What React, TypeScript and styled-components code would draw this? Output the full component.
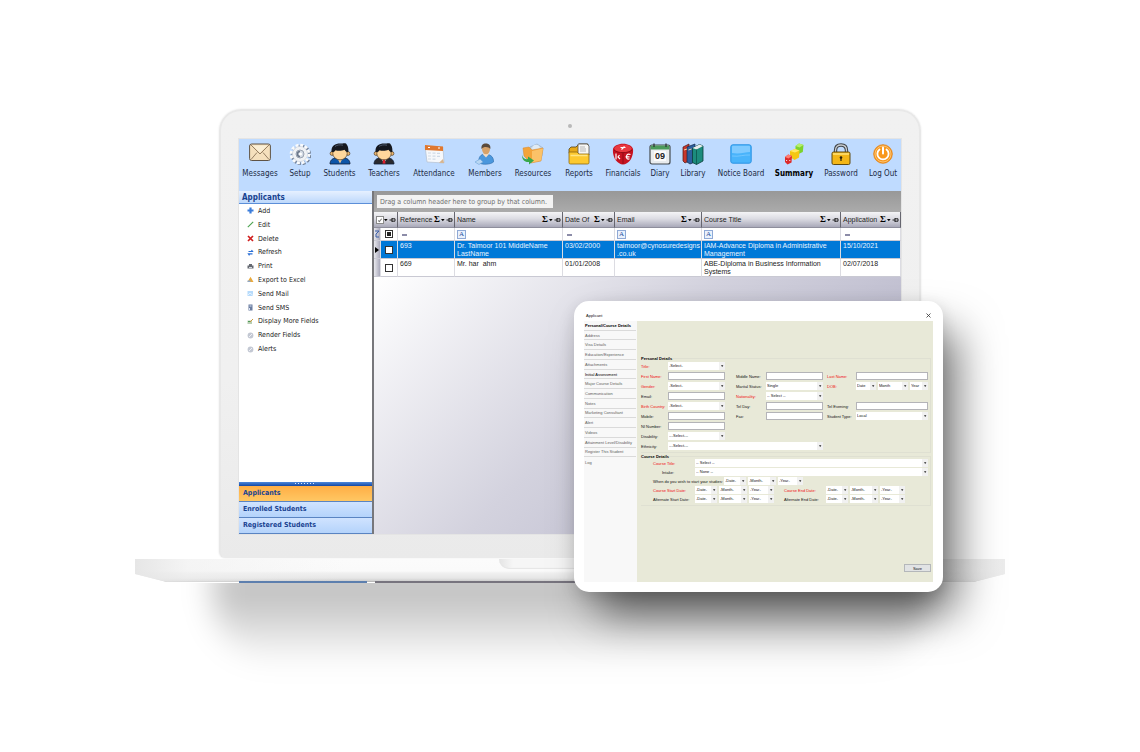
import React from "react";
import styled, { createGlobalStyle, css } from "styled-components";

const UI = `"DejaVu Sans Condensed", "DejaVu Sans", sans-serif`;
const GRID = `"Liberation Sans", Arial, sans-serif`;

const Global = createGlobalStyle`
  *, *::before, *::after { box-sizing: border-box; }
  body { margin: 0; background: #fff; font-family: ${UI}; color: #222; }
  button, input, select { font: inherit; color: inherit; margin: 0; padding: 0; border: 0; border-radius: 0; background: none; }
  button { cursor: pointer; }
  ul { list-style: none; margin: 0; padding: 0; }
  h1, h2 { margin: 0; }
`;

/* ---------- Laptop ---------- */

const Page = styled.main`
  min-height: 100vh;
  padding: 109px 135px 60px;
  overflow: hidden;
`;

const Laptop = styled.div`
  position: relative;
  display: flex;
  flex-direction: column;
`;

const Lid = styled.section`
  margin: 0 84px;
  padding: 0 18px 24px;
  border: 2px solid #e8e8e8;
  border-bottom: 0;
  border-radius: 22px 22px 6px 6px;
  background: linear-gradient(#f1f1f1, #f0f0f0 60%, #eaeaea);
  box-shadow: 0 0 2px #e4e4e4;
`;

const CameraBar = styled.div`
  height: 28px;
  display: grid;
  place-items: center;
  padding-top: 2px;
  &::before {
    content: "";
    width: 4px;
    height: 4px;
    border-radius: 50%;
    background: #b9b9b9;
  }
`;

const Screen = styled.div`
  display: flex;
  flex-direction: column;
  height: 395px;
  overflow: hidden;
  outline: 1px solid #e4e4e4;
  background: #fff;
`;

const Base = styled.div`
  position: relative;
  height: 23px;
  margin-top: 1px;
  display: flex;
  justify-content: center;
  background: linear-gradient(90deg, #e6e6e6, rgba(240, 240, 240, 0.6) 6%, transparent 24%, transparent 76%, #ececec),
    linear-gradient(#fbfbfb, #fafafa 12px, #f0f0f0 14px, #e6e6e6 19px, #cfcfcf 22px, #a5a5a5);
  clip-path: polygon(0 0, 100% 0, 100% 15px, calc(100% - 12px) 18px, calc(100% - 32px) 100%, 32px 100%, 12px 18px, 0 15px);
`;

const Notch = styled.div`
  width: 142px;
  height: 10px;
  border-radius: 0 0 10px 10px;
  background: linear-gradient(90deg, #e4e4e4, #f6f6f6 10%, #f6f6f6 90%, #e4e4e4);
  box-shadow: inset 0 -1px 1px #e6e6e6;
`;

const Underside = styled.div`
  display: flex;
  gap: 8px;
  height: 2px;
  margin: -1px 104px 0;
  position: relative;
  &::before {
    content: "";
    width: 128px;
    background: #5d7fae;
  }
  &::after {
    content: "";
    flex: 1;
    background: #77747e;
  }
`;

const FloorShadow = styled.div`
  height: 110px;
  overflow: hidden;
  padding: 0 78px;
  &::before {
    content: "";
    display: block;
    height: 100px;
    margin-top: -18px;
    background: linear-gradient(rgba(0, 0, 0, 0.27), rgba(0, 0, 0, 0.21) 40%, rgba(0, 0, 0, 0));
    border-radius: 0 0 70px 70px;
    filter: blur(15px);
  }
`;

/* ---------- Toolbar ---------- */

const Toolbar = styled.nav`
  flex: none;
  height: 52px;
  display: grid;
  grid-template-columns: 40fr 40fr 39fr 50fr 50fr 52fr 44fr 48fr 40fr 34fr 32fr 64fr 42fr 52fr 32fr;
  justify-items: center;
  align-items: start;
  padding: 4px 2px 0 1px;
  background: #bfdbff;
`;

const Tool = styled.button<{ $strong?: boolean }>`
  display: flex;
  flex-direction: column;
  align-items: center;
  gap: 3px;
  white-space: nowrap;
  font-size: 8px;
  line-height: 12px;
  font-weight: ${(p) => (p.$strong ? 700 : 400)};
  color: ${(p) => (p.$strong ? "#000" : "#1d2b45")};
  svg { width: 22px; height: 22px; display: block; }
`;

const Envelope = () => (
  <svg viewBox="0 0 22 22">
    <rect x=".6" y="1" width="20.800" height="16.500" rx="2" fill="#f5e0bd" stroke="#5f5345" />
    <path d="M2 2l9 9 9-9M2 16.500l6-7M20 16.500l-6-7" fill="none" stroke="#8b755a" strokeWidth=".9" />
    <path d="M3.500 2.500h15L11 9.500z" fill="#fbefd6" />
  </svg>
);
const Cog = () => (
  <svg viewBox="0 0 22 22">
    <circle cx="12" cy="12" r="8.800" fill="none" stroke="#76859b" strokeWidth="3" strokeDasharray="2.9 1.708" />
    <circle cx="11" cy="11" r="8.800" fill="none" stroke="#fafbfc" strokeWidth="3" strokeDasharray="2.9 1.708" />
    <circle cx="11" cy="11" r="7.600" fill="#f0f2f5" stroke="#c3c9d2" strokeWidth=".5" />
    <circle cx="11" cy="11" r="4" fill="#d3dae4" stroke="#9aa3b1" strokeWidth="1" />
    <path d="M11 8.500a2.500 2.500 0 1 0 0 5" fill="none" stroke="#6b7789" strokeWidth="1.500" />
    <circle cx="11.500" cy="11" r="1.500" fill="#fff" />
  </svg>
);
const Person = ({ teacher }: { teacher?: boolean }) => (
  <svg viewBox="0 0 22 22">
    <path d="M1 21c0-4 3-6 6-6h8c3 0 6 2 6 6z" fill={teacher ? "#2a2a2e" : "#0d55a8"} stroke="#10203a" strokeWidth=".8" />
    <path d="M8 14.500h6l-3 6z" fill={teacher ? "#fff" : "#f5c78a"} />
    {teacher && <path d="M10.200 16h1.600l.7 4.500h-3z" fill="#e01e2d" />}
    <circle cx="3" cy="10.500" r="1.900" fill="#f0b970" stroke="#3a2a18" strokeWidth=".6" />
    <circle cx="19" cy="10.500" r="1.900" fill="#f0b970" stroke="#3a2a18" strokeWidth=".6" />
    <ellipse cx="11" cy="10.500" rx="7.200" ry="6.300" fill="#ffd79c" stroke="#3a2a18" strokeWidth=".6" />
    <path d="M2.500 9C2 3 6 .6 11 .6c3 0 4-.8 6-.1 2 2 2.700 5.500 2.300 8.500-2 0-2.800-.8-3.800-2.300-3 1.500-7 1.200-9 .5-.6 1.500-2.500 2-4 1.800z" fill="#15181f" />
    <path d="M6 3.500c2-1.600 5-2 8-1.300" fill="none" stroke="#59677c" strokeWidth=".8" />
  </svg>
);
const Planner = () => (
  <svg viewBox="0 0 22 22">
    <path d="M2 3l18 1 1 16-17-1z" fill="#f6f8fb" stroke="#b8c4d4" strokeWidth=".8" />
    <path d="M2 2l18 1.500V8L2 7z" fill="#e0782f" />
    <path d="M5 4.500h2M15 5h2" stroke="#fff" strokeWidth="1.200" />
    <path d="M5 10h3M9.500 10.200h3M14 10.400h3M5 13h3M9.500 13.200h3M14 13.400h3M5 16h3M9.500 16.200h3" stroke="#cfd9e6" strokeWidth="1.200" />
    <path d="M16 19.800l5 .2-1-4z" fill="#d7b48e" />
  </svg>
);
const Member = () => (
  <svg viewBox="0 0 22 22">
    <path d="M5 20c-1-6 2-9 6-9s9 2 8.500 8c-3 2.500-10 3-14.500 1z" fill="#4a97dd" stroke="#2b69a8" strokeWidth=".6" />
    <path d="M9 11.500l3 3 3-3.500-1-2H10z" fill="#f3dcc4" />
    <ellipse cx="12" cy="6" rx="4" ry="5.200" fill="#d6a26a" />
    <path d="M7.500 6C7 2 9 .3 12 .4c3 .1 5 2 4.300 5.600C15 4 10 3 7.500 6z" fill="#5a4a3c" />
    <path d="M1 19l5-3 3 3-4 2.500z" fill="#b9d7f3" stroke="#6ea4d6" strokeWidth=".6" />
  </svg>
);
const Resource = () => (
  <svg viewBox="0 0 22 22">
    <path d="M8 4l7-3 6 4-1 8H9z" fill="#c6d6e6" stroke="#90a8c0" strokeWidth=".6" />
    <circle cx="14" cy="5.500" r="3.800" fill="#dfeaf5" />
    <path d="M1 5l6-1 3 3 11-2-2 13-10 2L2 13z" fill="#f3a43a" stroke="#d9872a" strokeWidth=".5" />
    <path d="M10 8l11-2.500-2 12-9 2z" fill="#fbc268" />
    <path d="M0 12c1 4 4 4.500 6 4v-2.500l6 4-5 4v-2.500c-4 .5-7-2-7-7z" fill="#39a849" />
  </svg>
);
const Folder = () => (
  <svg viewBox="0 0 22 22">
    <path d="M1 9V6l2-2h5l3-3h9v12H2z" fill="#e7a918" stroke="#54431a" strokeWidth=".8" />
    <path d="M10 1h9l2 2v9H10z" fill="#f7f7f5" stroke="#55524a" strokeWidth=".8" />
    <path d="M12 4h5M12 6h6M12 8h6" stroke="#a7a7a7" strokeWidth=".8" />
    <path d="M1 9h8l2 2h10v8.500c0 1-.5 1.500-1.500 1.500h-17C1.500 21 1 20.500 1 19.500z" fill="#fdc92f" stroke="#8a6811" strokeWidth=".8" />
    <path d="M2.500 12.500h17" stroke="#ffe684" strokeWidth="1.500" />
  </svg>
);
const Dice = () => (
  <svg viewBox="0 0 22 22">
    <path d="M11 .8c5 0 9.500 2.400 10 5.200.5 4-1 9-3 11.500-1.700 2.200-4.500 4-7 4s-5.300-1.800-7-4C2 15 .5 10 1 6 1.500 3.200 6 .8 11 .8z" fill="#c61220" />
    <ellipse cx="11" cy="5.500" rx="8.700" ry="4" fill="#e8383f" />
    <path d="M11 9.500V21M2 7c2 2 5.500 2.600 9 2.600S18 9 20 7" fill="none" stroke="#8d0912" strokeWidth=".9" />
    <path d="M8.500 4.500h5M9.500 6.500l3-3M4 10.500v6M7.500 12l-1.500 2 2 2M18.500 11.500c-3-1.300-4 .4-4 2.300s1 2.800 3 2M13.500 13.800h4" stroke="#fff" strokeWidth="1.200" fill="none" />
  </svg>
);
const NumText = styled.text`
  font: 700 9px "Liberation Sans", sans-serif;
`;
const Calendar = () => (
  <svg viewBox="0 0 22 22">
    <rect x="1" y="2" width="20" height="19" rx="2" fill="#e9ecee" stroke="#454b50" strokeWidth="1.200" />
    <path d="M1.600 4c0-1 .6-1.500 1.400-1.500h16c.9 0 1.400.5 1.400 1.500v2.500H1.600z" fill="#4b9a5a" />
    <path d="M5 .5v3.500M17 .5v3.500" stroke="#303438" strokeWidth="1.300" />
    <rect x="5" y="8" width="12" height="10" fill="#fbfbfb" />
    <NumText x="11" y="16" textAnchor="middle" fill="#222">09</NumText>
  </svg>
);
const Books = () => (
  <svg viewBox="0 0 22 22">
    <path d="M1 4l6-3v17l-4 2-2-2z" fill="#c9372c" stroke="#4d1512" strokeWidth=".7" />
    <path d="M5 4l8-3v18l-5 2-3-2z" fill="#2c5f9e" stroke="#12294a" strokeWidth=".7" />
    <path d="M10.500 5l7-3.500L21 3v15l-6.500 3.500-4-2z" fill="#1c8c7d" stroke="#0b3d39" strokeWidth=".8" />
    <path d="M10.500 5l4 1.500L21 3l-3.500-1.500z" fill="#e8ecec" />
    <path d="M14.500 6.500v15" stroke="#0d564d" strokeWidth=".8" />
    <path d="M2 7l3-1M6.500 7l3-1" stroke="#f3d6a0" strokeWidth="1" />
  </svg>
);
const Board = () => (
  <svg viewBox="0 0 22 22">
    <rect x=".8" y="1.800" width="20.400" height="18.400" rx="2" fill="#49b4fb" stroke="#2a93e4" />
    <path d="M2 10V4c0-.8.4-1.200 1.200-1.200h15.600c.8 0 1.200.4 1.200 1.200v5c-5 0-10 2.500-18 1z" fill="#7fcaff" />
    <path d="M2 13c7 1 12-1.500 18-1" fill="none" stroke="#7ccaff" strokeWidth=".8" />
  </svg>
);
const Cubes = () => (
  <svg viewBox="0 0 22 22">
    <path d="M12.500 3L16 .5 20.500 2l-.7 7-4.300 2-3-2z" fill="#7cd32c" />
    <path d="M12.500 3l4 1.500L20.500 2 16 .5z" fill="#b6ee6b" />
    <path d="M7 8l5-2 4.500 1.500-.5 7-4.500 2.500L7 14z" fill="#f4c713" />
    <path d="M7 8l5 1.500 4.500-2L12 6z" fill="#ffe969" />
    <path d="M2 14l3.200-2.500L9 13l-.5 6.500L4.500 21.500 2 19z" fill="#dc2a2a" />
    <path d="M2 14l3.500 1.500L9 13l-3.800-1.500z" fill="#ff7f74" />
    <circle cx="3.600" cy="17.500" r=".6" fill="#fff" />
    <circle cx="6.800" cy="17.500" r=".6" fill="#fff" />
  </svg>
);
const Padlock = () => (
  <svg viewBox="0 0 22 22">
    <path d="M5.500 10V7.500C5.500 3.500 8 2 11 2s5.500 1.500 5.500 5.500V10" fill="none" stroke="#3f4347" strokeWidth="3.400" />
    <path d="M5.500 10V7.500C5.500 3.500 8 2 11 2s5.500 1.500 5.500 5.500V10" fill="none" stroke="#c9ced3" strokeWidth="1.300" />
    <rect x="2" y="9" width="18" height="12.500" rx="1.500" fill="#f3b617" stroke="#5e4a12" />
    <path d="M3 11h16" stroke="#ffe27a" strokeWidth="1.500" />
    <circle cx="11" cy="14.500" r="1.300" fill="#2b230c" />
    <path d="M11 14.500v3.500" stroke="#2b230c" strokeWidth="1.200" />
  </svg>
);
const PowerIcon = () => (
  <svg viewBox="0 0 22 22">
    <circle cx="11" cy="11" r="9.300" fill="#f8981d" stroke="#e07d10" strokeWidth=".8" />
    <circle cx="11" cy="11" r="8" fill="none" stroke="#fcc271" strokeWidth="1" />
    <path d="M7.500 6.500a5.600 5.600 0 1 0 7 0" fill="none" stroke="#fff" strokeWidth="1.800" strokeLinecap="round" />
    <path d="M11 4.500v6" stroke="#fff" strokeWidth="2" strokeLinecap="round" />
  </svg>
);

const TOOLS: { label: string; icon: React.ReactNode; strong?: boolean }[] = [
  { label: "Messages", icon: <Envelope /> },
  { label: "Setup", icon: <Cog /> },
  { label: "Students", icon: <Person /> },
  { label: "Teachers", icon: <Person teacher /> },
  { label: "Attendance", icon: <Planner /> },
  { label: "Members", icon: <Member /> },
  { label: "Resources", icon: <Resource /> },
  { label: "Reports", icon: <Folder /> },
  { label: "Financials", icon: <Dice /> },
  { label: "Diary", icon: <Calendar /> },
  { label: "Library", icon: <Books /> },
  { label: "Notice Board", icon: <Board /> },
  { label: "Summary", icon: <Cubes />, strong: true },
  { label: "Password", icon: <Padlock /> },
  { label: "Log Out", icon: <PowerIcon /> },
];

/* ---------- Sidebar ---------- */

const Workspace = styled.div`
  flex: 1;
  min-height: 0;
  display: flex;
`;

const Sidebar = styled.aside`
  flex: none;
  width: 135px;
  display: flex;
  flex-direction: column;
  border-right: 2px solid #77777b;
  background: #fff;
`;

const SideTitle = styled.h2`
  height: 13px;
  padding-left: 3px;
  border-bottom: 1px solid #5c8fd8;
  background: linear-gradient(#e6f0ff, #bdd8fb);
  font-size: 8px;
  line-height: 13px;
  color: #17418f;
`;

const SideMenu = styled.ul`
  height: 152px;
  display: grid;
  grid-auto-rows: 1fr;
`;

const SideLink = styled.button`
  height: 100%;
  display: flex;
  align-items: center;
  gap: 4px;
  padding-left: 8px;
  font-size: 7px;
  line-height: 10px;
  color: #222;
  svg { width: 7px; height: 7px; }
`;

const SideTabs = styled.div`
  margin-top: auto;
  display: flex;
  flex-direction: column;
`;

const Splitter = styled.div`
  height: 4px;
  display: flex;
  justify-content: center;
  background: linear-gradient(#4d88dc, #1248a5);
  &::before {
    content: "";
    width: 21px;
    height: 1px;
    margin-top: 1px;
    background: repeating-linear-gradient(90deg, #dce9ff 0 1px, transparent 1px 3px);
  }
`;

const SideTab = styled.button<{ $active?: boolean }>`
  height: 16px;
  padding: 0 4px;
  text-align: left;
  font-size: 7px;
  line-height: 15px;
  font-weight: 700;
  color: #1a4392;
  border-bottom: 1px solid #5a84c2;
  background: ${(p) => (p.$active ? "linear-gradient(#ffae45, #ffc763)" : "linear-gradient(#d0e3ff, #b4d3fb)")};
`;

const small = { viewBox: "0 0 7 7" };
const PageIcon = ({ fill, mark }: { fill: string; mark: string }) => (
  <svg {...small}>
    <rect x=".5" y="1" width="5.500" height="5" fill={fill} />
    <path d="M1 5l2-2 3 2.500" fill="none" stroke={mark} />
  </svg>
);
const Disc = () => (
  <svg {...small}>
    <circle cx="3.500" cy="3.500" r="2.900" fill="#c3c8d3" />
    <path d="M2 5l3-3" stroke="#eef0f6" />
  </svg>
);

const MENU: { label: string; icon: React.ReactNode }[] = [
  { label: "Add", icon: <svg {...small}><path d="M3.500.5v6M.5 3.500h6" stroke="#3b7ddb" strokeWidth="2.200" /></svg> },
  { label: "Edit", icon: <svg {...small}><path d="M.8 6.200L6.200.8" stroke="#4ba34f" strokeWidth="1.100" /></svg> },
  { label: "Delete", icon: <svg {...small}><path d="M1 1l5 5M6 1L1 6" stroke="#d01f1f" strokeWidth="1.700" /></svg> },
  { label: "Refresh", icon: <svg {...small}><path d="M1.500 2.500h4L4.500 1M5.500 4.800h-4l1 1.500" fill="none" stroke="#2a6fd6" strokeWidth="1.200" /></svg> },
  { label: "Print", icon: <svg {...small}><path d="M2 1h3v1.500h1.500V5.500h-6V2.500H2z" fill="#666a72" /><path d="M2 4.500h3" stroke="#d6dae0" /></svg> },
  { label: "Export to Excel", icon: <svg {...small}><path d="M3.500.8l3 5.200H.5z" fill="#e9a93c" /><path d="M.5 4.500h3V6h-3z" fill="#8fa8c8" /></svg> },
  { label: "Send Mail", icon: <PageIcon fill="#b7dbfb" mark="#e6f3ff" /> },
  { label: "Send SMS", icon: <svg {...small}><rect x="1.500" y=".5" width="4" height="6" fill="#6b7da0" /><path d="M2.500 2h2M2.500 4v2" stroke="#dbe4f5" /></svg> },
  { label: "Display More Fields", icon: <svg {...small}><path d="M.5 2.500h4.500V6H.5z" fill="#b9cfb4" /><path d="M3 4l3-3" stroke="#c9973a" /><path d="M1 3.500h2" stroke="#4f9a57" /></svg> },
  { label: "Render Fields", icon: <Disc /> },
  { label: "Alerts", icon: <Disc /> },
];

/* ---------- Applicant grid ---------- */

const GridArea = styled.div`
  flex: 1;
  min-width: 0;
  background: linear-gradient(135deg, #fff 10%, #d3d2de 50%, #aeadc4);
  font-family: ${GRID};
`;

const GroupBar = styled.div`
  height: 21px;
  padding: 4px 3px;
  background: linear-gradient(#989898, #ababab);
`;

const GroupHint = styled.span`
  display: inline-block;
  height: 13px;
  padding: 0 6px 0 3px;
  background: #f3f3f3;
  font: 7px/14px ${UI};
  color: #6e6e6e;
  vertical-align: top;
`;

const DataTable = styled.table`
  width: 100%;
  table-layout: fixed;
  border-collapse: separate;
  border-spacing: 0;
  font-size: 7px;
  line-height: 8px;
  text-align: left;
`;

const Col = styled.col<{ $w?: number }>`
  ${(p) => p.$w && css`width: ${p.$w}px;`}
`;

const Head = styled.th`
  height: 16px;
  padding: 0 1px 0 2px;
  font-weight: 400;
  white-space: nowrap;
  background: linear-gradient(#f4f4f6, #dcdce3 45%, #a9a9b9);
  border-right: 1px solid #66666f;
  border-bottom: 1px solid #8e8e9c;
  overflow: hidden;
`;

const HeadLine = styled.span`
  display: flex;
  align-items: center;
  justify-content: space-between;
`;

const HeadTools = styled.span`
  display: flex;
  align-items: center;
  gap: 1px;
  font: 700 9px/9px "Liberation Serif", serif;
  color: #000;
  svg { width: 12px; height: 6px; }
`;

const Cell = styled.td`
  height: 18px;
  padding: 1px 1px 0 2px;
  vertical-align: top;
  border-right: 1px solid #dcdce2;
  border-bottom: 1px solid #c9c9d3;
  white-space: pre-wrap;
  overflow-wrap: anywhere;
  overflow: hidden;
`;

const RowHead = styled(Cell)`
  padding: 0 1px;
  vertical-align: middle;
  background: linear-gradient(90deg, #e9e9ee, #a8a8ba);
  svg { display: block; width: 5px; height: 8px; }
`;

const CheckCell = styled(Cell)`
  padding: 0 3px 0 4px;
  vertical-align: middle;
`;

const Row = styled.tr<{ $selected?: boolean }>`
  background: #fff;
  ${(p) =>
    p.$selected &&
    css`
      background: #0078d7;
      color: #e8f4ff;
    `}
`;

const FilterRow = styled.tr`
  background: #fff;
  ${Cell} { height: 13px; vertical-align: middle; }
`;

const FilterMark = styled.button<{ $letter?: boolean }>`
  display: block;
  width: 9px;
  height: 9px;
  text-align: center;
  font: 7px/7px "Liberation Serif", serif;
  color: #1d4d9d;
  ${(p) =>
    p.$letter
      ? css`border: 1px solid #8fa9d6; background: #eaf1fc; `
      : css`
          &::before { content: ""; display: block; width: 5px; height: 2px; margin: 0 2px; background: #8c8ca8; }
        `}
`;

const Tick = styled.input`
  appearance: none;
  display: grid;
  place-items: center;
  width: 8px;
  height: 8px;
  border: 1px solid #333;
  background: #fff;
  &:indeterminate { box-shadow: inset 0 0 0 1px #fff; background: #222; }
  &:checked { border-color: #8a8a8a; }
  &:checked::before {
    content: "";
    width: 2px;
    height: 4px;
    border: solid #777;
    border-width: 0 1px 1px 0;
    transform: rotate(40deg);
  }
`;

const Sum = () => (
  <HeadTools>
    Σ
    <svg viewBox="0 0 12 6">
      <path d="M0 2h3.600L1.800 4.200z" fill="#000" />
      <path d="M5.500 3H8M8 1v4M8 1.800h3v2.400H8" fill="none" stroke="#111" strokeWidth=".9" />
    </svg>
  </HeadTools>
);

const COLUMNS = [
  { label: "Reference", width: 57, letter: false },
  { label: "Name", width: 108, letter: true },
  { label: "Date Of", width: 52, letter: false },
  { label: "Email", width: 87, letter: true },
  { label: "Course Title", letter: true },
  { label: "Application", width: 60, letter: false },
];

const ROWS = [
  ["693", "Dr. Taimoor 101 MiddleName LastName", "03/02/2000", "taimoor@cynosuredesigns.co.uk", "IAM-Advance Diploma in Administrative Management", "15/10/2021"],
  ["669", "Mr. har  ahm", "01/01/2008", "", "ABE-Diploma in Business Information Systems", "02/07/2018"],
];

const indeterminate = (el: HTMLInputElement | null) => {
  if (el) el.indeterminate = true;
};

const ApplicantGrid = () => (
  <GridArea>
    <GroupBar>
      <GroupHint>Drag a column header here to group by that column.</GroupHint>
    </GroupBar>
    <DataTable>
      <colgroup>
        <Col $w={7} />
        <Col $w={17} />
        {COLUMNS.map((c) => <Col key={c.label} $w={c.width} />)}
      </colgroup>
      <thead>
        <tr>
          <Head colSpan={2}>
            <HeadLine>
              <Tick type="checkbox" aria-label="Select all" defaultChecked />
              <HeadTools>
                <svg viewBox="0 0 12 6">
                  <path d="M0 2h3.600L1.800 4.200z" fill="#000" />
                  <path d="M5.500 3H8M8 1v4M8 1.800h3v2.400H8" fill="none" stroke="#111" strokeWidth=".9" />
                </svg>
              </HeadTools>
            </HeadLine>
          </Head>
          {COLUMNS.map((c) => (
            <Head key={c.label}>
              <HeadLine>{c.label}<Sum /></HeadLine>
            </Head>
          ))}
        </tr>
      </thead>
      <tbody>
        <FilterRow>
          <RowHead>
            <svg viewBox="0 0 5 8"><path d="M0 1h4L1 4v3h3" fill="none" stroke="#3b5fa8" /></svg>
          </RowHead>
          <CheckCell><Tick type="checkbox" aria-label="Filter selected" ref={indeterminate} /></CheckCell>
          {COLUMNS.map((c) => (
            <Cell key={c.label}>
              <FilterMark $letter={c.letter} aria-label={`Filter ${c.label}`}>{c.letter ? "A" : null}</FilterMark>
            </Cell>
          ))}
        </FilterRow>
        {ROWS.map((row, i) => (
          <Row key={row[0]} $selected={i === 0}>
            <RowHead>
              {i === 0 && <svg viewBox="0 0 5 8"><path d="M0 1l4 3-4 3z" fill="#000" /></svg>}
            </RowHead>
            <CheckCell><Tick type="checkbox" aria-label={`Select ${row[0]}`} /></CheckCell>
            {row.map((text, j) => <Cell key={j}>{text}</Cell>)}
          </Row>
        ))}
      </tbody>
    </DataTable>
  </GridArea>
);

/* ---------- Applicant dialog ---------- */

const Dialog = styled.section`
  position: absolute;
  top: 192px;
  right: 62px;
  width: 369px;
  height: 291px;
  padding: 0 10px 10px;
  display: flex;
  flex-direction: column;
  border-radius: 15px;
  background: #fff;
  box-shadow: 18px 26px 44px -4px rgba(0, 0, 0, 0.55), 0 4px 16px rgba(0, 0, 0, 0.12);
  font: 4px/5px ${GRID};
  color: #111;
`;

const DialogBar = styled.header`
  flex: none;
  height: 20px;
  padding: 8px 2px 0;
  display: flex;
  justify-content: space-between;
  align-items: center;
`;

const DialogTitle = styled.h1`
  font-size: 4px;
  font-weight: 400;
`;

const Close = styled.button`
  display: grid;
  svg { width: 5px; height: 5px; }
`;

const DialogBody = styled.div`
  flex: 1;
  display: flex;
`;

const Sections = styled.ul`
  flex: none;
  width: 53px;
  background: #f8f8f8;
  display: grid;
  grid-template-rows: repeat(15, 1fr);
  padding-bottom: 115px;
`;

const SectionLink = styled.button<{ $tone?: "bold" | "dark" }>`
  display: block;
  width: 52px;
  height: 100%;
  padding-left: 1px;
  text-align: left;
  white-space: nowrap;
  border-bottom: 1px solid #dadada;
  font-weight: ${(p) => (p.$tone === "bold" ? 700 : 400)};
  color: ${(p) => (p.$tone ? "#000" : "#606060")};
  li:last-child > & { border-bottom: 0; }
`;

const Form = styled.form`
  flex: 1;
  padding: 35px 2px 10px 4px;
  display: flex;
  flex-direction: column;
  background: #e8e9d8;
`;

const Group = styled.fieldset`
  margin: 0;
  padding: 1px 0 2px;
  border: 1px solid #dfe0d2;
  border-left: 0;
  min-width: 0;
  legend {
    padding: 0;
    font-weight: 700;
    color: #000;
  }
  & + & {
    margin-top: 1px;
    padding-top: 0;
  }
`;

const Fields = styled.div`
  display: grid;
  grid-template-columns: 27px 57px 11px 30px 57px 4px 29px 1fr;
  grid-auto-rows: 8px;
  row-gap: 2px;
  align-items: center;
  padding-right: 2px;
`;

const Label = styled.label<{ $col?: number; $required?: boolean; $width?: number; $indent?: number }>`
  white-space: nowrap;
  ${(p) => p.$col && css`grid-column: ${p.$col};`}
  ${(p) => p.$width && css`flex: none; width: ${p.$width}px;`}
  ${(p) => p.$indent && css`padding-left: ${p.$indent}px;`}
  color: ${(p) => (p.$required ? "#f01010" : "#111")};
`;

const TextBox = styled.input`
  width: 100%;
  height: 8px;
  padding: 0 2px;
  border: 1px solid #b4b4b8;
  background: #fff;
`;

const PickFrame = styled.span<{ $width?: number; $span?: string }>`
  position: relative;
  display: block;
  min-width: 0;
  height: 8px;
  ${(p) => (p.$width ? css`flex: none; width: ${p.$width}px;` : css`flex: 1;`)}
  ${(p) => p.$span && css`grid-column: ${p.$span};`}
  svg {
    position: absolute;
    top: 0;
    right: 0;
    width: 6px;
    height: 8px;
    pointer-events: none;
  }
`;

const PickBox = styled.select`
  appearance: none;
  display: block;
  width: 100%;
  height: 8px;
  padding: 0 6px 0 1px;
  background: #fff;
  line-height: 8px;
`;

const Pick = ({ id, value, width, span }: { id: string; value: string; width?: number; span?: string }) => (
  <PickFrame $width={width} $span={span}>
    <PickBox id={id} aria-label={id}><option>{value}</option></PickBox>
    <svg viewBox="0 0 6 8">
      <path d="M0 0h6v8H0z" fill="#f1f1f1" />
      <path d="M2 3.200h2.400L3.200 5z" fill="#222" />
    </svg>
  </PickFrame>
);

const Line = styled.div`
  display: flex;
  align-items: center;
  gap: 2px;
  min-width: 0;
`;

const CourseLines = styled.div`
  display: grid;
  grid-auto-rows: 8px;
  row-gap: 1px;
  padding: 0 2px 0 12px;
`;

const Save = styled.button`
  align-self: flex-end;
  width: 27px;
  height: 8px;
  margin-top: auto;
  border: 1px solid #b4b7ba;
  background: #e1e3e4;
  text-align: center;
`;

const SECTIONS = [
  "Personal/Course Details", "Address", "Visa Details", "Education/Experience", "Attachments",
  "Initial Assessment", "Major Course Details", "Communication", "Notes", "Marketing Consultant",
  "Alert", "Videos", "Attainment Level/Disability", "Register This Student", "Log",
];

const DateTrio = ({ id }: { id: string }) => (
  <>
    <Pick id={`${id}-date`} value="-Date-" width={22} />
    <Pick id={`${id}-month`} value="-Month-" width={28} />
    <Pick id={`${id}-year`} value="-Year-" width={25} />
  </>
);

const ApplicantDialog = () => (
  <Dialog role="dialog" aria-labelledby="applicant-title">
    <DialogBar>
      <DialogTitle id="applicant-title">Applicant</DialogTitle>
      <Close aria-label="Close">
        <svg viewBox="0 0 5 5"><path d="M.5.5l4 4M4.500.5l-4 4" stroke="#333" strokeWidth=".8" /></svg>
      </Close>
    </DialogBar>
    <DialogBody>
      <Sections>
        {SECTIONS.map((s, i) => (
          <li key={s}>
            <SectionLink $tone={i === 0 ? "bold" : i === 5 ? "dark" : undefined}>{s}</SectionLink>
          </li>
        ))}
      </Sections>
      <Form onSubmit={(e) => e.preventDefault()}>
        <Group>
          <legend>Personal Details</legend>
          <Fields>
            <Label htmlFor="title" $required $col={1}>Title:</Label>
            <Pick id="title" value="-Select-" />

            <Label htmlFor="first" $required $col={1}>First Name:</Label>
            <TextBox id="first" />
            <Label htmlFor="middle" $col={4}>Middle Name:</Label>
            <TextBox id="middle" />
            <Label htmlFor="last" $required $col={7}>Last Name:</Label>
            <TextBox id="last" />

            <Label htmlFor="gender" $required $col={1}>Gender:</Label>
            <Pick id="gender" value="-Select-" />
            <Label htmlFor="marital" $col={4}>Marital Status:</Label>
            <Pick id="marital" value="Single" />
            <Label htmlFor="dob-date" $required $col={7}>DOB:</Label>
            <Line>
              <Pick id="dob-date" value="Date" width={20} />
              <Pick id="dob-month" value="Month" width={30} />
              <Pick id="dob-year" value="Year" />
            </Line>

            <Label htmlFor="email" $col={1}>Email:</Label>
            <TextBox id="email" />
            <Label htmlFor="nationality" $required $col={4}>Nationality:</Label>
            <Pick id="nationality" value="-- Select --" />

            <Label htmlFor="birth" $required $col={1}>Birth Country:</Label>
            <Pick id="birth" value="-Select-" />
            <Label htmlFor="telday" $col={4}>Tel Day:</Label>
            <TextBox id="telday" />
            <Label htmlFor="televening" $col={7}>Tel Evening:</Label>
            <TextBox id="televening" />

            <Label htmlFor="mobile" $col={1}>Mobile:</Label>
            <TextBox id="mobile" />
            <Label htmlFor="fax" $col={4}>Fax:</Label>
            <TextBox id="fax" />
            <Label htmlFor="type" $col={7}>Student Type:</Label>
            <Pick id="type" value="Local" />

            <Label htmlFor="ni" $col={1}>NI Number:</Label>
            <TextBox id="ni" />

            <Label htmlFor="disability" $col={1}>Disability:</Label>
            <Pick id="disability" value="---Select---" />

            <Label htmlFor="ethnicity" $col={1}>Ethnicity:</Label>
            <Pick id="ethnicity" value="---Select---" span="2 / 6" />
          </Fields>
        </Group>
        <Group>
          <legend>Course Details</legend>
          <CourseLines>
            <Line>
              <Label htmlFor="course" $required $width={40}>Course Title:</Label>
              <Pick id="course" value="-- Select --" />
            </Line>
            <Line>
              <Label htmlFor="intake" $width={40} $indent={9}>Intake:</Label>
              <Pick id="intake" value="-- None --" />
            </Line>
            <Line>
              <Label htmlFor="wish-date" $width={69}>When do you wish to start your studies:</Label>
              <DateTrio id="wish" />
            </Line>
            <Line>
              <Label htmlFor="start-date" $required $width={40}>Course Start Date:</Label>
              <DateTrio id="start" />
              <Label htmlFor="end-date" $required $width={48} $indent={8}>Course End Date:</Label>
              <DateTrio id="end" />
            </Line>
            <Line>
              <Label htmlFor="alt-start-date" $width={40}>Alternate Start Date:</Label>
              <DateTrio id="alt-start" />
              <Label htmlFor="alt-end-date" $width={48} $indent={8}>Alternate End Date:</Label>
              <DateTrio id="alt-end" />
            </Line>
          </CourseLines>
        </Group>
        <Save type="submit">Save</Save>
      </Form>
    </DialogBody>
  </Dialog>
);

export default function App() {
  return (
    <>
      <Global />
      <Page>
        <Laptop>
          <Lid>
            <CameraBar />
            <Screen>
              <Toolbar>
                {TOOLS.map((t) => (
                  <Tool key={t.label} $strong={t.strong}>{t.icon}{t.label}</Tool>
                ))}
              </Toolbar>
              <Workspace>
                <Sidebar>
                  <SideTitle>Applicants</SideTitle>
                  <SideMenu>
                    {MENU.map((m) => (
                      <li key={m.label}><SideLink>{m.icon}{m.label}</SideLink></li>
                    ))}
                  </SideMenu>
                  <SideTabs>
                    <Splitter />
                    <SideTab $active>Applicants</SideTab>
                    <SideTab>Enrolled Students</SideTab>
                    <SideTab>Registered Students</SideTab>
                  </SideTabs>
                </Sidebar>
                <ApplicantGrid />
              </Workspace>
            </Screen>
          </Lid>
          <Base><Notch /></Base>
          <Underside />
          <FloorShadow />
          <ApplicantDialog />
        </Laptop>
      </Page>
    </>
  );
}
